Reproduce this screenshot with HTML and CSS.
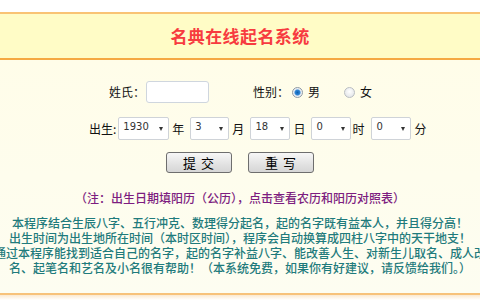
FILE: index.html
```html
<!DOCTYPE html>
<html lang="zh-CN">
<head>
<meta charset="utf-8">
<title>名典在线起名系统</title>
<link rel="stylesheet" href="styles.css">
</head>
<body>
<div class="top-gap"></div>
<header class="header">
  <h1 class="title">名典在线起名系统</h1>
</header>
<main class="main">
  <form class="form">
    <div class="row row-name">
      <label class="lbl" for="xing">姓氏：</label>
      <input class="text-input" id="xing" type="text">
      <span class="lbl lbl-sex">性别：</span>
      <span class="radio checked"></span><span class="opt">男</span>
      <span class="radio"></span><span class="opt">女</span>
    </div>
    <div class="row row-birth">
      <span class="lbl">出生:</span>
      <span class="sel w51"><span class="sel-val">1930</span></span><span class="unit">年</span>
      <span class="sel w39"><span class="sel-val">3</span></span><span class="unit">月</span>
      <span class="sel w40"><span class="sel-val">18</span></span><span class="unit">日</span>
      <span class="sel w40"><span class="sel-val">0</span></span><span class="unit tight">时</span>
      <span class="sel w40"><span class="sel-val">0</span></span><span class="unit">分</span>
    </div>
    <div class="row row-btn">
      <button type="button" class="btn">提 交</button>
      <button type="button" class="btn">重 写</button>
    </div>
  </form>
  <p class="note">（注：出生日期填阳历（公历），点击查看农历和阳历对照表）</p>
  <div class="desc">
    <div class="line">本程序结合生辰八字、五行冲克、数理得分起名，起的名字既有益本人，并且得分高！</div>
    <div class="line">出生时间为出生地所在时间（本时区时间），程序会自动换算成四柱八字中的天干地支！</div>
    <div class="line">通过本程序能找到适合自己的名字，起的名字补益八字、能改善人生、对新生儿取名、成人改</div>
    <div class="line">名、起笔名和艺名及小名很有帮助！（本系统免费，如果你有好建议，请反馈给我们。）</div>
  </div>
</main>
<div class="bottom"></div>
</body>
</html>
```

FILE: styles.css
```css
html, body {
  margin: 0;
  padding: 0;
  background: #ffffff;
  overflow: hidden;
}
body {
  width: 480px;
  height: 300px;
  font-family: "Noto Sans CJK SC", "DejaVu Sans", sans-serif;
  font-size: 12px;
  color: #111;
}
.top-gap {
  height: 12px;
}
.header {
  height: 44px;
  border-top: 2px solid #f9c374;
  border-bottom: 2px solid #f5a942;
  background: #fffcc6;
  display: flex;
  align-items: center;
  justify-content: center;
}
.title {
  margin: 0;
  font-size: 17px;
  line-height: 20px;
  font-weight: bold;
  color: #f73b3f;
  letter-spacing: 0.4px;
}
.main {
  height: 233px;
  background: linear-gradient(#fffde9, #fdfdf1);
  border-bottom: 2px solid #f7c27a;
  display: flex;
  flex-direction: column;
  overflow: hidden;
}
.form {
  display: flex;
  flex-direction: column;
  margin: 0;
}
.row {
  display: flex;
  align-items: center;
}
.row-name {
  margin-top: 21px;
  height: 22px;
  padding-left: 109px;
}
.lbl {
  white-space: nowrap;
  line-height: 16px;
}
.text-input {
  box-sizing: border-box;
  width: 63px;
  height: 22px;
  margin: 0 0 0 1px;
  border: 1px solid #cfd6de;
  border-radius: 3px;
  background: #fff;
  padding: 0;
}
.lbl-sex {
  margin-left: 44px;
}
.radio {
  box-sizing: border-box;
  width: 11px;
  height: 11px;
  border-radius: 50%;
  border: 1px solid #b9bdc2;
  background: radial-gradient(circle at 50% 40%, #ffffff, #dcdfe3);
  margin-left: 3px;
  margin-right: 5px;
}
.radio.checked {
  background: radial-gradient(circle, #0a5fb0 0, #2f86d6 2.5px, #e3eaf2 3.5px, #f4f6f8 5px);
  border-color: #8f99a3;
}
.opt {
  line-height: 16px;
}
.opt + .radio {
  margin-left: 24px;
}
.row-birth {
  margin-top: 14px;
  height: 23px;
  padding-left: 89px;
}
.sel {
  box-sizing: border-box;
  height: 23px;
  border: 1px solid #cfd3d8;
  border-radius: 2px;
  background: #fff;
  display: flex;
  align-items: center;
  position: relative;
  margin-left: 2px;
}
.sel::after {
  content: "";
  position: absolute;
  right: 5px;
  top: 9px;
  border-left: 2.5px solid transparent;
  border-right: 2.5px solid transparent;
  border-top: 4px solid #333;
}
.sel-val {
  font-family: "DejaVu Sans", sans-serif;
  font-size: 10px;
  line-height: 12px;
  color: #333;
  padding-left: 4px;
  position: relative;
  top: -2px;
}
.w51 { width: 51px; }
.w39 { width: 39px; }
.w40 { width: 40px; }
.unit {
  line-height: 16px;
  margin-left: 3px;
  margin-right: 4px;
}
.unit.tight {
  margin-left: 1px;
  margin-right: 5px;
}
.row-btn {
  margin-top: 12px;
  justify-content: center;
  gap: 16px;
}
.btn {
  box-sizing: border-box;
  width: 66px;
  height: 21px;
  padding: 0;
  border: 1px solid #6e6e6e;
  border-radius: 3px;
  background: linear-gradient(#f7f7f7, #e2e2e2 60%, #d6d6d6);
  font-family: "Noto Sans CJK SC", sans-serif;
  font-size: 13px;
  line-height: 17px;
  color: #000;
  letter-spacing: 1px;
}
.note {
  margin: 17px 0 0 0;
  text-align: center;
  color: #7d1d80;
  line-height: 15px;
  font-weight: 500;
  font-size: 12px;
  white-space: nowrap;
}
.desc {
  margin-top: 10px;
  color: #1f7b7c;
  font-weight: 500;
  font-size: 12px;
  line-height: 15px;
}
.line {
  white-space: nowrap;
  display: flex;
  justify-content: center;
}
.bottom {
  height: 5px;
  background: linear-gradient(#fbe9cf, #ffffff);
}
```
